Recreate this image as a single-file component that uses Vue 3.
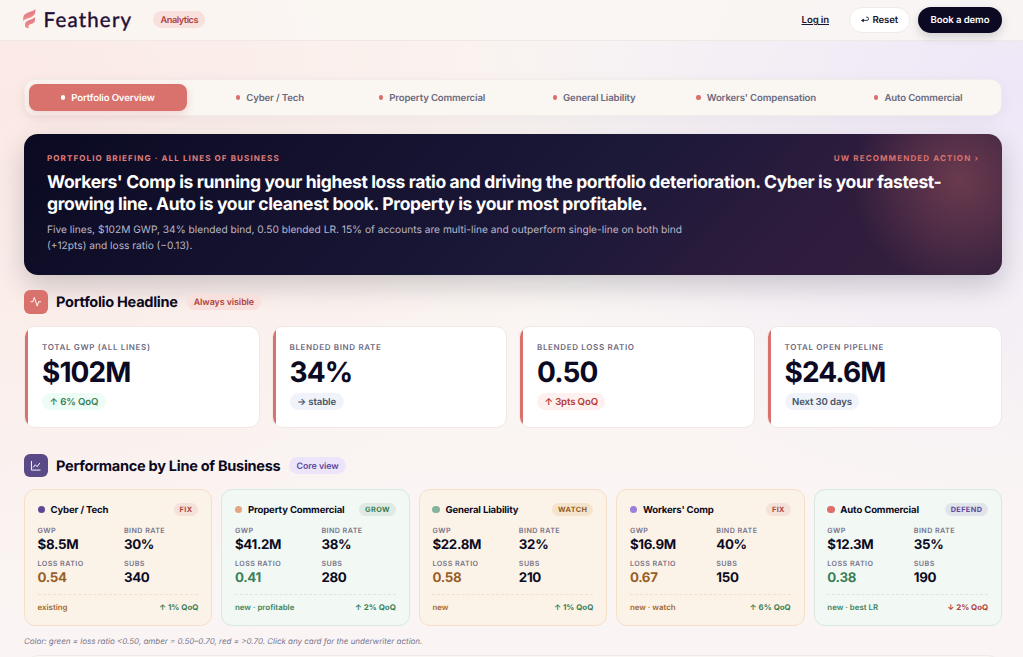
<template>
  <div class="page">
    <header class="topbar">
      <div class="brand">
        <svg class="brand-mark" viewBox="0 0 12.5 20" aria-hidden="true">
          <defs>
            <linearGradient id="feather" x1="0" y1="0" x2="0.3" y2="1">
              <stop offset="0" stop-color="#d9628a" />
              <stop offset="1" stop-color="#f39a86" />
            </linearGradient>
          </defs>
          <path fill="url(#feather)" d="M.2 12.200V9.600C.2 6.200 1.800 4.800 4.800 3.700 8.200 2.500 11 1.700 12.300 0v2.600c0 3-1.600 4.600-4.600 5.800C4.300 9.700 1.400 9.900.2 12.200z" />
          <path fill="url(#feather)" d="M2 16.800v-1c0-2.500 1.400-3.600 4-4.600 2.800-1 5-1.600 6.100-3.200v2.200c0 3-1.600 4-3.900 4.900-2 .8-2.700 1.100-2.500 2.200.1.900-.1 1.600-.5 2.100C3.300 19.200 2 18.400 2 16.800z" />
        </svg>
        <span class="brand-name">Feathery</span>
        <span class="chip chip-coral brand-chip">Analytics</span>
      </div>
      <div class="top-actions">
        <a class="login" href="#">Log in</a>
        <button type="button" class="btn-reset">
          <svg viewBox="0 0 9 8" aria-hidden="true">
            <path d="M1 4.400h5.400a1.700 1.700 0 0 0 0-3.400H5.500" fill="none" stroke="currentColor" stroke-width="0.9" />
            <path d="M0 4.400L2.900 2.500v3.800z" fill="currentColor" />
          </svg>
          Reset
        </button>
        <button type="button" class="btn-demo">Book a demo</button>
      </div>
    </header>

    <main>
      <nav class="tabs">
        <button
          v-for="tab in tabs"
          :key="tab"
          type="button"
          :class="{ active: tab === activeTab }"
          @click="activeTab = tab"
        >
          <i></i>{{ tab }}
        </button>
      </nav>

      <section class="briefing">
        <div class="briefing-head">
          <span>PORTFOLIO BRIEFING · ALL LINES OF BUSINESS</span>
          <span class="briefing-action">UW RECOMMENDED ACTION ›</span>
        </div>
        <h1>
          Workers' Comp is running your highest loss ratio and driving the portfolio deterioration. Cyber is your fastest-<br />growing line. Auto is your cleanest book. Property is your most profitable.
        </h1>
        <p>
          Five lines, $102M GWP, 34% blended bind, 0.50 blended LR. 15% of accounts are multi-line and outperform single-line on both bind<br />(+12pts) and loss ratio (−0.13).
        </p>
      </section>

      <div class="section-title">
        <span class="section-icon coral">
          <svg viewBox="0 0 24 24" aria-hidden="true"><path d="M22 12h-4l-3 9L9 3l-3 9H2" /></svg>
        </span>
        <h2>Portfolio Headline</h2>
        <span class="chip chip-coral">Always visible</span>
      </div>

      <section class="metrics">
        <article v-for="metric in metrics" :key="metric.label">
          <span class="metric-label">{{ metric.label }}</span>
          <strong>{{ metric.value }}</strong>
          <span class="trend" :class="metric.tone">{{ metric.trend }}</span>
        </article>
      </section>

      <div class="section-title second">
        <span class="section-icon purple">
          <svg viewBox="0 0 24 24" aria-hidden="true"><path d="M3 3v18h18M7 15l4-5 4 4 5-7" /></svg>
        </span>
        <h2>Performance by Line of Business</h2>
        <span class="chip chip-purple">Core view</span>
      </div>

      <section class="lines">
        <article v-for="line in lines" :key="line.name" :class="line.tone">
          <div class="line-head">
            <i :class="line.dot"></i>
            <strong>{{ line.name }}</strong>
            <span class="tag" :class="line.action.toLowerCase()">{{ line.action }}</span>
          </div>
          <dl>
            <div><dt>GWP</dt><dd>{{ line.gwp }}</dd></div>
            <div><dt>BIND RATE</dt><dd>{{ line.bind }}</dd></div>
            <div><dt>LOSS RATIO</dt><dd class="ratio">{{ line.loss }}</dd></div>
            <div><dt>SUBS</dt><dd>{{ line.subs }}</dd></div>
          </dl>
          <div class="line-foot">
            <span>{{ line.note }}</span>
            <b :class="{ down: line.change.startsWith('↓') }">{{ line.change }}</b>
          </div>
        </article>
      </section>

      <p class="legend">Color: green = loss ratio &lt;0.50, amber = 0.50–0.70, red = &gt;0.70. Click any card for the underwriter action.</p>
      <section class="next-panel"></section>
    </main>
  </div>
</template>

<script setup>
import { ref } from 'vue'

const tabs = [
  'Portfolio Overview',
  'Cyber / Tech',
  'Property Commercial',
  'General Liability',
  "Workers' Compensation",
  'Auto Commercial',
]
const activeTab = ref('Portfolio Overview')

const metrics = [
  { label: 'TOTAL GWP (ALL LINES)', value: '$102M', trend: '↑ 6% QoQ', tone: 'good' },
  { label: 'BLENDED BIND RATE', value: '34%', trend: '→ stable', tone: 'flat' },
  { label: 'BLENDED LOSS RATIO', value: '0.50', trend: '↑ 3pts QoQ', tone: 'bad' },
  { label: 'TOTAL OPEN PIPELINE', value: '$24.6M', trend: 'Next 30 days', tone: 'flat' },
]

const lines = [
  { name: 'Cyber / Tech', dot: 'indigo', action: 'FIX', tone: 'amber', gwp: '$8.5M', bind: '30%', loss: '0.54', subs: '340', note: 'existing', change: '↑ 1% QoQ' },
  { name: 'Property Commercial', dot: 'orange', action: 'GROW', tone: 'green', gwp: '$41.2M', bind: '38%', loss: '0.41', subs: '280', note: 'new · profitable', change: '↑ 2% QoQ' },
  { name: 'General Liability', dot: 'sage', action: 'WATCH', tone: 'amber', gwp: '$22.8M', bind: '32%', loss: '0.58', subs: '210', note: 'new', change: '↑ 1% QoQ' },
  { name: "Workers' Comp", dot: 'violet', action: 'FIX', tone: 'amber', gwp: '$16.9M', bind: '40%', loss: '0.67', subs: '150', note: 'new · watch', change: '↑ 6% QoQ' },
  { name: 'Auto Commercial', dot: 'red', action: 'DEFEND', tone: 'green', gwp: '$12.3M', bind: '35%', loss: '0.38', subs: '190', note: 'new · best LR', change: '↓ 2% QoQ' },
]
</script>

<style>
html, body { height: 100%; overflow: hidden; }
</style>

<style scoped>
* { box-sizing: border-box; }
.page { height: 657px; overflow: hidden; color: #0b0a22; font-family: Inter, "Liberation Sans", sans-serif; text-rendering: geometricPrecision; background: radial-gradient(ellipse 620px 520px at 0 16%, #fbe9e5 0%, rgba(251,233,229,0) 100%), radial-gradient(ellipse 560px 420px at 100% 14%, #eee7f8 0%, rgba(238,231,248,0) 100%), linear-gradient(#faf6f2, #faf5f4); }
button { margin: 0; padding: 0; border: 0; font-family: inherit; text-rendering: inherit; cursor: pointer; }
h1, h2, p, dl, dd { margin: 0; }

.topbar { display: flex; align-items: center; justify-content: space-between; height: 41px; padding: 0 21px 1px 23px; border-bottom: 1px solid #efe8e5; background: rgba(250,247,243,.82); }
.brand, .top-actions { display: flex; align-items: center; }
.brand-mark { width: 12.500px; height: 20px; margin-top: -2px; }
.brand-name { width: 88px; margin-left: 8px; color: #210f35; font-family: Lato, sans-serif; font-size: 20.500px; line-height: 28px; letter-spacing: 1.200px; -webkit-text-stroke: .4px #210f35; }
.chip { display: inline-flex; align-items: center; height: 16.500px; padding: 1px 7px 0; border-radius: 99px; font-size: 8.850px; font-weight: 600; letter-spacing: -.05px; white-space: nowrap; }
.brand-chip { width: 51.500px; margin-left: 21.500px; padding: 1px 7.500px 0; font-size: 9.200px; letter-spacing: -.45px; }
.chip-coral { background: #f8e0dc; color: #b1423f; }
.chip-purple { background: #ece5fa; color: #5f499b; }
.login { margin-right: 20px; padding-top: 2px; color: #17142d; font-size: 9.650px; font-weight: 600; letter-spacing: -.12px; text-underline-offset: 1px; }
.btn-reset, .btn-demo { height: 26px; padding-top: 2px; border-radius: 99px; font-size: 9.650px; font-weight: 600; letter-spacing: -.12px; }
.btn-reset { display: flex; align-items: center; justify-content: center; gap: 3px; width: 61px; margin-right: 8px; border: 1px solid #f0ebe8; background: #fff; color: #17142d; }
.btn-reset svg { width: 8.500px; height: 8px; margin-top: -2px; }
.btn-demo { width: 84px; background: #0b0a22; color: #fff; box-shadow: 0 4px 10px rgba(11,10,34,.16); }

main { padding: 38px 21px 0 24px; }
.tabs { display: grid; grid-template-columns: repeat(6, 1fr); gap: 4.500px; height: 36.500px; padding: 4px; border: 1px solid #f2ebe7; border-radius: 11px; background: #faf6f2; box-shadow: 0 3px 14px rgba(11,10,34,.05); }
.tabs button { display: flex; align-items: center; justify-content: center; gap: 6px; padding-top: 1.500px; border-radius: 8px; background: transparent; color: #6c697f; font-size: 9.650px; font-weight: 600; letter-spacing: -.15px; white-space: nowrap; }
.tabs i { width: 4.500px; height: 4.500px; margin-top: -1px; border-radius: 50%; background: #d9706c; }
.tabs .active { background: #d9716d; color: #fff; box-shadow: 0 3px 9px rgba(217,113,109,.25); }
.tabs .active i { background: #fff; }

.briefing { height: 141px; margin-top: 18px; padding: 19.500px 23px 0; border-radius: 14px; background: radial-gradient(circle 108px at 936px 46px, rgba(217,113,109,.34) 0%, rgba(217,113,109,.18) 50%, rgba(217,113,109,0) 100%), linear-gradient(135deg, #0b0a22 0%, #1b1838 55%, #2e1c3d 78%, #35203e 100%); box-shadow: 0 11px 28px rgba(11,10,34,.19); color: #fff; }
.briefing-head { display: flex; justify-content: space-between; height: 11px; color: #e07f7c; font-size: 8.020px; line-height: 11px; font-weight: 700; letter-spacing: 1.120px; }
.briefing-head .briefing-action { color: #d9716d; }
.briefing h1 { margin-top: 8px; font-size: 17.500px; line-height: 21.800px; font-weight: 700; letter-spacing: -.365px; white-space: nowrap; }
.briefing p { margin-top: 6.300px; color: #b9b7c8; font-size: 10.200px; line-height: 16.300px; white-space: nowrap; }

.section-title { display: flex; align-items: center; height: 24px; margin-top: 15.500px; }
.section-title.second { margin-top: 26px; }
.section-icon { display: flex; align-items: center; justify-content: center; width: 23.500px; height: 23.500px; border-radius: 6px; }
.section-icon.coral { background: #d9716d; }
.section-icon.purple { background: #5b4a88; }
.section-icon svg { width: 11.500px; height: 11.500px; fill: none; stroke: #fff; stroke-width: 2; stroke-linecap: round; stroke-linejoin: round; }
h2 { margin: 0 9px 0 8.500px; font-size: 14.560px; line-height: 20px; font-weight: 700; letter-spacing: -.29px; white-space: nowrap; }

.metrics { display: grid; grid-template-columns: repeat(4, 1fr); gap: 12px; margin-top: 11.500px; }
.metrics article { position: relative; display: flex; flex-direction: column; align-items: flex-start; height: 102px; padding: 15.500px 17px 0; overflow: hidden; border: 1px solid #f1e8e5; border-radius: 11px; background: #fff; }
.metrics article::before { position: absolute; inset: 0 auto 0 0; width: 3px; background: #d9716d; content: ""; }
.metric-label { color: #6c697f; font-size: 8.020px; line-height: 11px; font-weight: 600; letter-spacing: .64px; }
.metrics strong { margin-top: 3px; font-size: 28px; line-height: 32px; font-weight: 700; letter-spacing: -.9px; }
.trend { display: flex; align-items: center; height: 17px; margin-top: 5px; padding: 2px 7.500px 0; border-radius: 99px; font-size: 9.600px; font-weight: 600; letter-spacing: -.12px; }
.trend.good { background: #edfcf4; color: #3a8058; }
.trend.flat { background: #f0f4fa; color: #475467; }
.trend.bad { background: #fdf0ef; color: #b53a34; }

.lines { display: grid; grid-template-columns: repeat(5, 1fr); gap: 9.300px; margin-top: 11.500px; }
.lines article { height: 137px; padding: 12.500px 12.800px 0 12.500px; border: 1px solid; border-radius: 11px; }
.lines .amber { border-color: #f6dfc8; background: #fcf3e8; }
.lines .green { border-color: #d6eadf; background: #f2f8f4; }
.line-head { display: flex; align-items: center; height: 14px; }
.line-head i { width: 7.500px; height: 7.500px; margin-right: 5.500px; border-radius: 50%; }
.line-head strong { padding-top: 1px; font-size: 9.550px; font-weight: 700; letter-spacing: -.14px; white-space: nowrap; }
.indigo { background: #5b4a93; }
.orange { background: #e3a67e; }
.sage { background: #85b39d; }
.violet { background: #9a80db; }
.red { background: #dc6f6a; }
.tag { display: flex; align-items: center; height: 13.500px; margin-left: auto; padding: 0 5.800px; border-radius: 99px; font-size: 7.300px; font-weight: 700; letter-spacing: .42px; }
.tag.fix { background: #f4e2d9; color: #b1423f; }
.tag.grow { background: #dfeae3; color: #3a8058; }
.tag.watch { background: #f5e4cc; color: #925d25; }
.tag.defend { background: #e1e4ea; color: #5f499b; }
.lines dl { display: grid; grid-template-columns: 1fr 1fr; gap: 5px 12px; margin-top: 8.200px; }
.lines dl div { height: 28.500px; }
.lines dt { color: #77748a; font-size: 7.150px; line-height: 11px; font-weight: 600; letter-spacing: .43px; }
.lines dd { margin: 0; padding-top: 1.300px; font-size: 13.300px; line-height: 17px; font-weight: 700; letter-spacing: -.32px; }
.amber .ratio { color: #985f27; }
.green .ratio { color: #3a8058; }
.line-foot { display: flex; justify-content: space-between; margin-top: 7.300px; padding-top: 7px; border-top: 1px dashed; font-size: 7.900px; line-height: 11px; font-weight: 600; }
.amber .line-foot { border-color: #f6dfc8; color: #a26831; }
.green .line-foot { border-color: #d6eadf; color: #3f855e; }
.line-foot b { color: #3a8058; font-weight: 700; }
.line-foot b.down { color: #b1423f; }
.legend { margin-top: 9.200px; color: #77748a; font-size: 7.980px; line-height: 12px; font-style: italic; }
.next-panel { height: 40px; margin-top: 8px; border: 1px solid #f0e9e7; border-radius: 14px; background: #faf7f5; }
</style>
